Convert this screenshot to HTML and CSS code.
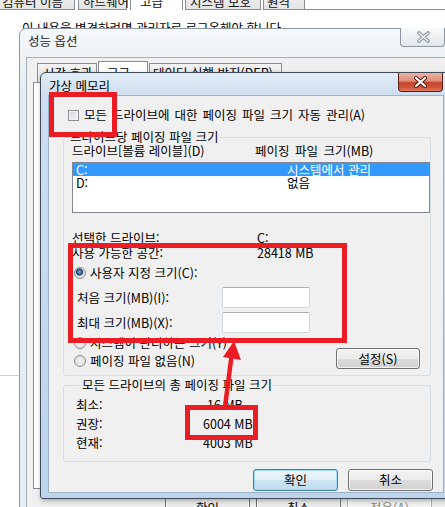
FILE: index.html
```html
<!DOCTYPE html>
<html lang="ko">
<head>
<meta charset="utf-8">
<title>가상 메모리</title>
<link rel="stylesheet" href="styles.css">
</head>
<body>
<div class="desk">
  <div class="sys-tabs">
    <span class="stab">컴퓨터 이름</span>
    <span class="stab">하드웨어</span>
    <span class="stab stab-on">고급</span>
    <span class="stab">시스템 보호</span>
    <span class="stab">원격</span>
    <span class="stab-fill"></span>
  </div>
  <p class="sys-note">이 내용을 변경하려면 관리자로 로그온해야 합니다.</p>
  <div class="sys-edge"></div>

  <section class="win win-po">
    <header class="po-title">
      <span class="po-title-text">성능 옵션</span>
      <span class="close close-off">
        <svg width="45" height="18" viewBox="0 0 45 18"><path d="M18 5 L27 13 M27 5 L18 13" stroke="#8a9098" stroke-width="3.6" stroke-linecap="round"/><path d="M18 5 L27 13 M27 5 L18 13" stroke="#f3f4f6" stroke-width="1.6" stroke-linecap="round"/></svg>
      </span>
    </header>
    <div class="po-client">
      <div class="po-tabs">
        <span class="ptab ptab-1">시각 효과</span>
        <span class="ptab ptab-on">고급</span>
        <span class="ptab ptab-3">데이터 실행 방지(DEP)</span>
      </div>
      <div class="po-panel"></div>
      <div class="po-buttons">
        <span class="btn po-btn">확인</span>
        <span class="btn po-btn">취소</span>
        <span class="btn po-btn btn-dis">적용(A)</span>
      </div>
    </div>
  </section>

  <section class="win win-vm">
    <header class="vm-title">
      <span class="vm-title-text">가상 메모리</span>
      <span class="close close-on">
        <svg width="43" height="18" viewBox="0 0 43 18"><path d="M17 5 L26 13 M26 5 L17 13" stroke="#4a1208" stroke-width="4" stroke-linecap="round"/><path d="M17 5 L26 13 M26 5 L17 13" stroke="#ffffff" stroke-width="2.2" stroke-linecap="round"/></svg>
      </span>
    </header>
    <div class="vm-client">
      <div class="vm-auto"><span class="check"></span><span>모든 드라이브에 대한 페이징 파일 크기 자동 관리(A)</span></div>

      <fieldset class="grp grp1">
        <legend>드라이브당 페이징 파일 크기</legend>
        <div class="lv-head"><span class="lv-c1">드라이브[볼륨 레이블](D)</span><span class="lv-c2">페이징 파일 크기(MB)</span></div>
        <div class="lv">
          <div class="lv-row lv-sel"><span>C:</span><span>시스템에서 관리</span></div>
          <div class="lv-row"><span>D:</span><span>없음</span></div>
        </div>
        <div class="info">
          <div class="info-row"><span>선택한 드라이브:</span><span>C:</span></div>
          <div class="info-row"><span>사용 가능한 공간:</span><span>28418 MB</span></div>
        </div>
        <div class="opt opt-first"><span class="radio radio-on"></span><span>사용자 지정 크기(C):</span></div>
        <div class="sizes">
          <div class="size-row"><span class="size-label">처음 크기(MB)(I):</span><span class="inp"></span></div>
          <div class="size-row"><span class="size-label">최대 크기(MB)(X):</span><span class="inp"></span></div>
        </div>
        <div class="opt-block">
          <div class="opt-col">
            <div class="opt"><span class="radio"></span><span>시스템이 관리하는 크기(Y)</span></div>
            <div class="opt"><span class="radio"></span><span>페이징 파일 없음(N)</span></div>
          </div>
          <span class="btn btn-set">설정(S)</span>
        </div>
      </fieldset>

      <fieldset class="grp grp2">
        <legend>모든 드라이브의 총 페이징 파일 크기</legend>
        <div class="tot-row"><span>최소:</span><span class="tot-v tot-min">16 MB</span></div>
        <div class="tot-row"><span>권장:</span><span class="tot-v">6004 MB</span></div>
        <div class="tot-row"><span>현재:</span><span class="tot-v">4003 MB</span></div>
      </fieldset>

      <div class="vm-buttons">
        <span class="btn btn-def vm-btn">확인</span>
        <span class="btn vm-btn">취소</span>
      </div>
    </div>
  </section>

  <div class="mark mark-check"></div>
  <div class="mark mark-custom"></div>
  <div class="mark mark-rec"></div>
  <svg class="arrow" width="445" height="507" viewBox="0 0 445 507">
    <path d="M225 407 L231.5 356" stroke="#ec1c24" stroke-width="4.5" fill="none"/>
    <polygon points="234,341 241,360 223,357" fill="#ec1c24"/>
  </svg>
</div>
</body>
</html>
```

FILE: styles.css
```css
* { box-sizing: border-box; }
html, body { margin: 0; padding: 0; }
body {
  width: 445px;
  height: 507px;
  overflow: hidden;
  background: #fff;
  font-family: "Noto Sans CJK KR", "Noto Sans", sans-serif;
  font-size: 12.5px;
  color: #000;
}
.desk {
  position: relative;
  width: 445px;
  height: 507px;
  overflow: hidden;
  background: #fff;
}

/* ---------- background window (시스템 속성) ---------- */
.sys-tabs {
  display: flex;
  align-items: flex-end;
  height: 10px;
}
.stab {
  flex: none;
  height: 20px;
  padding-top: 2px;
  line-height: 17px;
  border: 1px solid #898c95;
  background: linear-gradient(#f3f3f3, #e4e4e4);
  white-space: nowrap;
  color: #111;
}
.stab:nth-child(1) { margin-left: -6px; width: 81px; padding-left: 7px; }
.stab:nth-child(2) { margin-left: 3px; width: 49px; padding-left: 4px; }
.stab:nth-child(3) { margin-left: 3px; width: 53px; padding-left: 9px; }
.stab:nth-child(4) { margin-left: 2px; width: 76px; padding-left: 4px; }
.stab:nth-child(5) { margin-left: 2px; width: 42px; padding-left: 3px; }
.stab-on { background: #fff; border-bottom: none; }
.stab-fill { flex: 1; align-self: stretch; border-bottom: 1px solid #898c95; }
.sys-note {
  margin: 10px 0 0 22px;
  line-height: 15px;
  white-space: nowrap;
}
.sys-edge {
  width: 19px;
  height: 341px;
  border-bottom: 1px solid #cfd3d8;
}

/* ---------- windows ---------- */
.win { position: absolute; }

.close { display: block; flex: none; height: 19px; }
.close svg { display: block; }

/* 성능 옵션 (inactive) */
.win-po {
  left: 19px;
  top: 28px;
  width: 445px;
  height: 500px;
  border: 1px solid #8d98a4;
  border-radius: 7px 7px 0 0;
  background: linear-gradient(#f6f8fa, #e8ecf0 60px, #e9edf1);
  padding: 0 6px;
}
.po-title {
  display: flex;
  justify-content: space-between;
  align-items: flex-start;
  height: 28px;
}
.po-title-text {
  padding-left: 2px;
  line-height: 24px;
  color: #1e1e1e;
}
.close-off {
  width: 45px;
  margin: -1px 12px 0 0;
  border: 1px solid #8e959e;
  border-top: none;
  border-radius: 0 0 4px 4px;
  background: linear-gradient(#f8f9fa, #e3e7eb);
}
.po-client {
  height: 480px;
  border: 1px solid #a6b0bb;
  background: #f0f0f0;
}
.po-tabs {
  display: flex;
  align-items: flex-end;
  height: 24px;
  padding: 3px 0 0 10px;
}
.ptab {
  flex: none;
  height: 19px;
  line-height: 17px;
  border: 1px solid #898c95;
  border-bottom: none;
  background: linear-gradient(#f4f4f4, #e2e2e2);
  white-space: nowrap;
  margin-right: 1px;
}
.ptab-1 { width: 60px; padding-left: 5px; }
.ptab-on { width: 50px; height: 21px; padding: 2px 0 0 8px; background: #fff; }
.ptab-3 { width: 133px; padding-left: 3px; }
.po-panel {
  margin-left: 6px;
  height: 407px;
  border: 1px solid #898c95;
  background: #fff;
}
.po-buttons {
  display: flex;
  gap: 6px;
  margin-top: 7px;
  padding-left: 138px;
}
.po-btn { width: 85px; height: 23px; }

/* buttons */
.btn {
  display: flex;
  align-items: center;
  justify-content: center;
  flex: none;
  border: 1px solid #707070;
  border-radius: 3px;
  background: linear-gradient(#f2f2f2 0%, #ebebeb 50%, #dddddd 51%, #cfcfcf 100%);
  box-shadow: inset 0 0 0 1px rgba(255, 255, 255, 0.75);
  line-height: 16px;
  white-space: nowrap;
}
.btn-dis {
  color: #8b8b8b;
  border-color: #adb2b5;
  background: #f4f4f4;
}
.btn-def {
  border-color: #3c7fb1;
  background: linear-gradient(#eef7fc 0%, #dfeef7 50%, #cde4f2 51%, #c0dcee 100%);
  box-shadow: inset 0 0 0 1px #9fdcf7;
}

/* 가상 메모리 (active) */
.win-vm {
  left: 40px;
  top: 72px;
  width: 412px;
  height: 427px;
  border: 1px solid #3e4a57;
  border-radius: 6px 6px 3px 3px;
  background: linear-gradient(#e2ecf6, #cddef0 22px, #bed4eb);
  padding: 0 7px 5px;
  display: flex;
  flex-direction: column;
  box-shadow: 1px 2px 5px rgba(0, 0, 0, 0.3);
}
.vm-title {
  display: flex;
  justify-content: space-between;
  align-items: flex-start;
  height: 22px;
  flex: none;
}
.vm-title-text {
  padding: 2px 0 0 1px;
  line-height: 22px;
}
.close-on {
  width: 45px;
  margin-right: 1px;
  border: 1px solid #5b1e14;
  border-top: none;
  border-radius: 0 0 4px 4px;
  background: linear-gradient(#ebb3a5 0%, #de8c78 45%, #c6472e 52%, #cf5438 80%, #df7e66 100%);
}
.vm-client {
  flex: 1;
  border: 1px solid #9fb1c5;
  background: #f0f0f0;
  display: flex;
  flex-direction: column;
}

.vm-auto {
  display: flex;
  align-items: center;
  height: 14px;
  line-height: 14px;
  margin: 12px 0 0 19px;
  white-space: nowrap;
  word-spacing: 1.5px;
}
.check {
  flex: none;
  width: 11px;
  height: 11px;
  margin-right: 5px;
  border: 1px solid #8e8f8f;
  background: linear-gradient(135deg, #cfd3d8, #f6f6f6);
  box-shadow: inset 0 0 0 1px #f4f4f4;
}

.grp {
  margin: 8px 12px 0 14px;
  padding: 0;
  min-width: 0;
  border: 1px solid #d5dfe5;
  border-radius: 3px;
}
.grp legend {
  padding: 0 1px;
  margin-left: 5px;
  line-height: 14px;
  white-space: nowrap;
}
.grp1 { padding-bottom: 6px; }

.lv-head {
  display: flex;
  height: 14px;
  line-height: 14px;
  padding-left: 8px;
  white-space: nowrap;
}
.lv-c1 { width: 183px; flex: none; }
.lv-c2 { word-spacing: 2px; }
.lv {
  margin: 4px 0 0 8px;
  height: 51px;
  border: 1px solid #828790;
  background: #fff;
}
.lv-row {
  display: grid;
  grid-template-columns: 211px 1fr;
  height: 13px;
  line-height: 13px;
  padding-left: 3px;
  white-space: nowrap;
}
.lv-sel { background: #3399ff; color: #fff; }

.info { margin-top: 17px; padding-left: 8px; }
.info-row {
  display: grid;
  grid-template-columns: 185px 1fr;
  line-height: 15px;
  white-space: nowrap;
}

.opt {
  display: flex;
  align-items: center;
  height: 16px;
  line-height: 16px;
  white-space: nowrap;
}
.opt-first { margin-top: 5px; padding-left: 10px; }
.radio {
  flex: none;
  width: 12px;
  height: 12px;
  margin-right: 4px;
  border: 1px solid #8e8f8f;
  border-radius: 50%;
  background: radial-gradient(circle at 50% 50%, #f4f4f4 0, #dcdcdc 100%);
}
.radio-on {
  background: radial-gradient(circle at 45% 40%, #8fb6de 0, #2c5a8c 2.4px, #1d3f66 3.2px, #d9d9d9 3.9px, #f3f3f3 100%);
}

.sizes {
  display: flex;
  flex-direction: column;
  gap: 4px;
  margin-top: 6px;
  padding-left: 13px;
}
.size-row { display: flex; align-items: center; height: 21px; white-space: nowrap; }
.size-label { width: 145px; flex: none; }
.inp {
  width: 88px;
  height: 21px;
  border: 1px solid #d3d8de;
  border-top-color: #abadb3;
  border-radius: 2px;
  background: #fff;
}

.opt-block {
  display: flex;
  margin-top: 2px;
  padding: 0 10px 0 10px;
}
.opt-col { display: flex; flex-direction: column; gap: 2px; }
.btn-set {
  margin-left: auto;
  align-self: flex-end;
  width: 84px;
  height: 21px;
}

.grp2 { margin-top: 2px; padding: 3px 0 9px 12px; }
.tot-row {
  display: grid;
  grid-template-columns: 127px 1fr;
  height: 19px;
  line-height: 19px;
  white-space: nowrap;
}
.tot-min { padding-left: 4px; }

.vm-buttons {
  display: flex;
  justify-content: flex-end;
  gap: 10px;
  margin-top: 7px;
  padding-right: 10px;
}
.vm-btn { width: 85px; height: 22px; }

/* ---------- annotations ---------- */
.mark {
  position: absolute;
  border: 5px solid #ec1c24;
}
.mark-check { left: 49px; top: 92px; width: 68px; height: 45px; }
.mark-custom { left: 68px; top: 243px; width: 279px; height: 100px; }
.mark-rec { left: 185px; top: 405px; width: 73px; height: 35px; }
.arrow { position: absolute; left: 0; top: 0; }
```
